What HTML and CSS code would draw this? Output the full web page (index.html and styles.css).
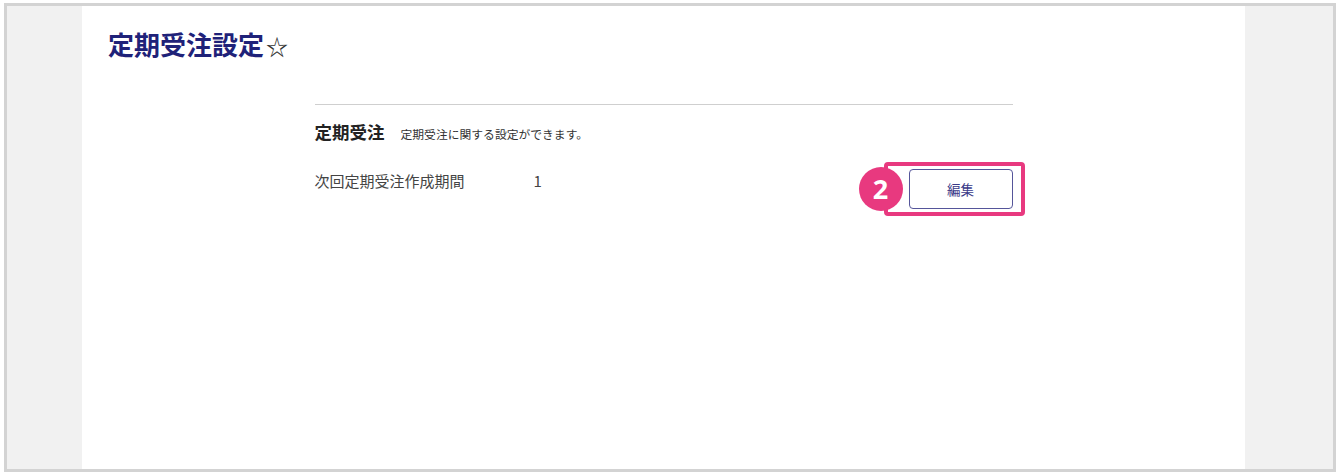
FILE: index.html
```html
<!DOCTYPE html>
<html lang="ja">
<head>
  <meta charset="UTF-8" />
  <meta name="viewport" content="width=device-width, initial-scale=1.0" />
  <title>定期受注設定</title>
  <link rel="stylesheet" href="styles.css">
</head>
<body>
  <div class="frame">
    <div class="side side-left"></div>
    <main class="main">
      <h1 class="page-title">定期受注設定<span class="star">☆</span></h1>
      <div class="settings">
        <div class="section-head">
          <span class="section-name">定期受注</span>
          <span class="section-desc">定期受注に関する設定ができます。</span>
        </div>
        <div class="row">
          <div class="row-label">次回定期受注作成期間</div>
          <div class="row-value">1</div>
          <div class="edit-wrap">
            <!-- annotation overlay -->
            <span class="callout-box"></span>
            <span class="callout-num">2</span>
            <button class="edit-btn">編集</button>
          </div>
        </div>
      </div>
    </main>
    <div class="side side-right"></div>
  </div>
</body>
</html>
```

FILE: styles.css
```css
/* Global Styles */
body {
  margin: 0;
  padding: 0;
  background-color: #fff;
  font-family: "Noto Sans CJK JP", "Noto Sans", sans-serif;
  color: #333;
}
.frame {
  display: flex;
  height: 463px;
  margin: 3px 2px 4px 4px;
  border: 3px solid #d3d3d3;
}
.side {
  background-color: #f1f1f1;
}
.side-left {
  width: 75px;
}
.side-right {
  width: 88px;
}
.main {
  flex: 1;
  background-color: #fff;
  padding: 20px 26px;
}
.page-title {
  margin: 0;
  font-size: 26px;
  line-height: 36px;
  font-weight: bold;
  color: #1f2279;
}
.star {
  font-size: 22px;
  font-weight: normal;
  color: #333;
  margin-left: 2px;
}
.settings {
  width: 698px;
  margin: 41px auto 0;
  border-top: 1px solid #cfcfcf;
}
.section-head {
  display: flex;
  align-items: baseline;
  padding-top: 15px;
  line-height: 24px;
}
.section-name {
  font-size: 17.5px;
  font-weight: bold;
  color: #222;
  margin-right: 16px;
}
.section-desc {
  font-size: 11.8px;
  color: #333;
}
.row {
  display: flex;
  align-items: flex-start;
  margin-top: 23px;
}
.row-label {
  width: 219px;
  font-size: 15px;
  line-height: 24px;
  color: #444;
}
.row-value {
  flex: 1;
  font-size: 15px;
  line-height: 24px;
  color: #444;
}
.edit-wrap {
  position: relative;
}
.edit-btn {
  display: block;
  width: 104px;
  height: 40px;
  background-color: #fff;
  border: 1px solid #55559a;
  border-radius: 4px;
  font-family: "Noto Sans CJK JP", sans-serif;
  font-size: 13.5px;
  color: #3a3a88;
  cursor: pointer;
  position: relative;
}
.callout-box {
  position: absolute;
  left: -25px;
  top: -7px;
  right: -12px;
  bottom: -7px;
  border: 4px solid #e8397f;
  border-radius: 4px;
}
.callout-num {
  position: absolute;
  left: -50px;
  top: -2px;
  width: 44px;
  height: 44px;
  border-radius: 50%;
  background-color: #e8397f;
  color: #fff;
  font-family: "Open Sans", sans-serif;
  font-weight: bold;
  font-size: 27px;
  line-height: 44px;
  text-align: center;
  z-index: 1;
}
```
